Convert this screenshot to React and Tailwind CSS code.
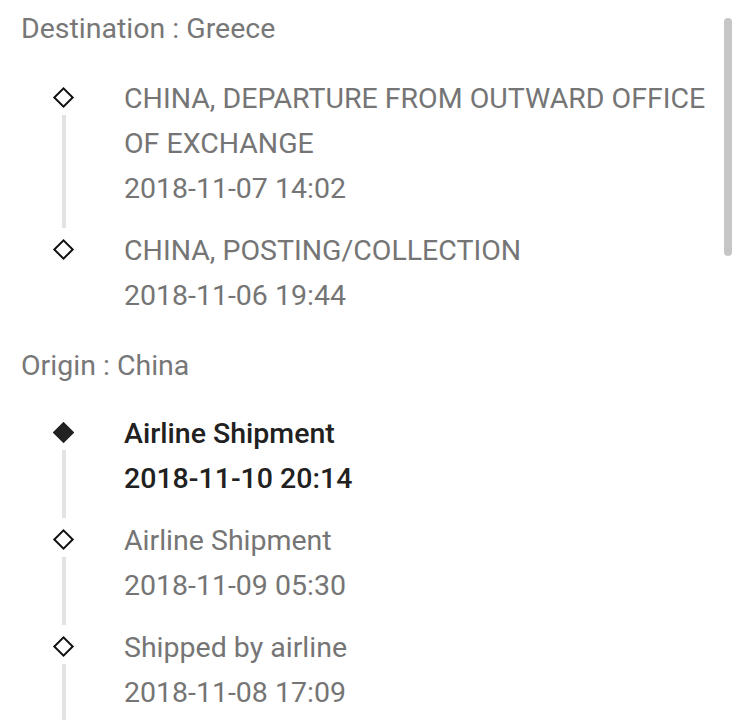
export default function App() {
  const groups = [
    {
      title: "Destination : Greece",
      mt: "mt-[6px]",
      mb: "mb-[25px]",
      items: [
        { t: "CHINA, DEPARTURE FROM OUTWARD OFFICE OF EXCHANGE", d: "2018-11-07 14:02" },
        { t: "CHINA, POSTING/COLLECTION", d: "2018-11-06 19:44", last: true },
      ],
    },
    {
      title: "Origin : China",
      mt: "mt-[8px]",
      mb: "mb-[23px]",
      items: [
        { t: "Airline Shipment", d: "2018-11-10 20:14", active: true },
        { t: "Airline Shipment", d: "2018-11-09 05:30" },
        { t: "Shipped by airline", d: "2018-11-08 17:09" },
      ],
    },
  ];
  return (
    <div
      className="relative w-full h-[720px] overflow-hidden bg-white"
      style={{ fontFamily: "Roboto, 'Liberation Sans', sans-serif" }}
    >
      <div className="pl-[21px] pr-[20px]">
        {groups.map((g, gi) => (
          <div key={gi}>
            <div className={`${g.mt} ${g.mb} text-[28.5px] leading-[45px] text-[#777777]`}>{g.title}</div>
            <div className="pl-[31px]">
              {g.items.map((it, i) => (
                <div key={i} className="flex pb-[17px]">
                  <div className="w-[23px] flex flex-col items-center pt-[10px] shrink-0">
                    <div className="w-[23px] h-[23px] flex items-center justify-center">
                      <div
                        className={`w-[15px] h-[15px] rotate-45 border-2 ${
                          it.active ? "bg-[#222222] border-[#222222]" : "bg-white border-[#111111]"
                        }`}
                      />
                    </div>
                    {!it.last && <div className="mt-[6px] -mb-[17px] flex-1 w-[4px] bg-[#e2e2e2]" />}
                  </div>
                  <div
                    className={`ml-[49px] text-[28.5px] leading-[45px] ${
                      it.active ? "text-[#212121] font-medium" : "text-[#757575]"
                    }`}
                  >
                    <div>{it.t}</div>
                    <div>{it.d}</div>
                  </div>
                </div>
              ))}
            </div>
          </div>
        ))}
      </div>
      <div className="absolute right-[5px] top-[18px] w-[8px] h-[238px] rounded-full bg-[#c6c6c6]" />
    </div>
  );
}
